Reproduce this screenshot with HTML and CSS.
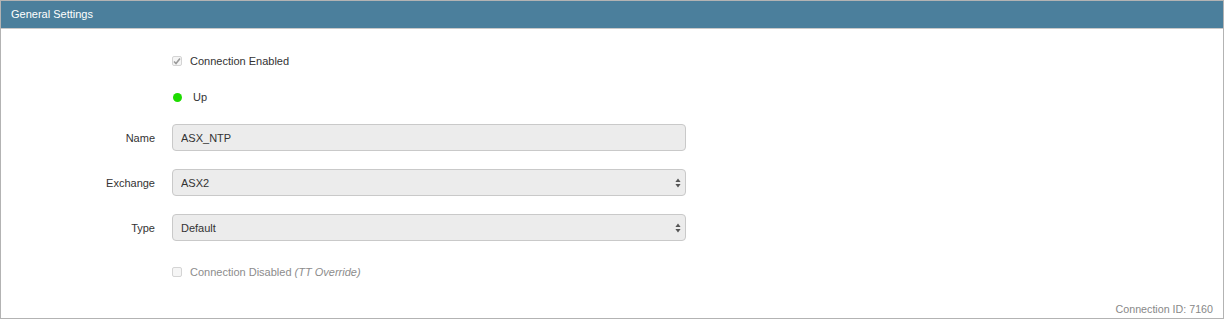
FILE: index.html
```html
<!DOCTYPE html>
<html lang="en">
<head>
  <meta charset="UTF-8">
  <link rel="stylesheet" href="styles.css">
</head>
<body>

  <div class="panel">
    <div class="panel-heading">General Settings</div>

    <div class="panel-body">
      <div class="row row-check">
        <span class="label"></span>
        <span class="check checked">
          <svg width="8" height="8" viewBox="0 0 8 8"><path d="M1 4.5 L3 6.5 L7 1.5" fill="none" stroke="#9a9a9a" stroke-width="1.6"/></svg>
        </span>
        <span class="check-text">Connection Enabled</span>
      </div>

      <div class="row row-status">
        <span class="label"></span>
        <span class="dot"></span>
        <span class="status-text">Up</span>
      </div>

      <div class="row row-field">
        <label class="label" for="name">Name</label>
        <input class="control" id="name" type="text" value="ASX_NTP" disabled>
      </div>

      <div class="row row-field">
        <label class="label" for="exchange">Exchange</label>
        <div class="select-wrap">
          <select class="control" id="exchange" disabled>
            <option>ASX2</option>
          </select>
          <svg class="arrows" width="6" height="10" viewBox="0 0 6 10"><path d="M3 0.5 L5.6 4 L0.4 4 Z M3 9.5 L5.6 6 L0.4 6 Z" fill="#555"/></svg>
        </div>
      </div>

      <div class="row row-field">
        <label class="label" for="type">Type</label>
        <div class="select-wrap">
          <select class="control" id="type" disabled>
            <option>Default</option>
          </select>
          <svg class="arrows" width="6" height="10" viewBox="0 0 6 10"><path d="M3 0.5 L5.6 4 L0.4 4 Z M3 9.5 L5.6 6 L0.4 6 Z" fill="#555"/></svg>
        </div>
      </div>

      <div class="row row-check row-disabled">
        <span class="label"></span>
        <span class="check"></span>
        <span class="check-text muted">Connection Disabled <em>(TT Override)</em></span>
      </div>

      <div class="footer">Connection ID: 7160</div>
    </div>
  </div>

</body>
</html>
```

FILE: styles.css
```css
body {
  margin: 0;
  font-family: 'Liberation Sans', Arial, sans-serif;
  font-size: 11px;
  color: #333;
  background: #fff;
}

.panel {
  box-sizing: border-box;
  width: 1224px;
  height: 319px;
  border: 1px solid #b3b3b3;
  display: flex;
  flex-direction: column;
}

.panel-heading {
  height: 27px;
  line-height: 27px;
  padding-left: 10px;
  background: #4b7f9c;
  color: #fff;
  border-bottom: 1px solid #c8c8c8;
}

.panel-body {
  flex: 1;
  display: flex;
  flex-direction: column;
  padding-top: 22px;
}

.row {
  display: flex;
  align-items: center;
}

.label {
  width: 154px;
  flex: none;
  text-align: right;
  margin-right: 17px;
}

.row-check {
  height: 20px;
}

.row-status {
  height: 20px;
  margin-top: 16px;
}

.row-field {
  height: 27px;
  margin-top: 17px;
}

.row-field + .row-field {
  margin-top: 18px;
}

.row-disabled {
  margin-top: 21px;
}

.check {
  box-sizing: border-box;
  width: 10px;
  height: 10px;
  border: 1px solid #d4d4d4;
  border-radius: 2px;
  background: #f5f5f5;
  display: flex;
  align-items: center;
  justify-content: center;
}

.check-text {
  margin-left: 8px;
}

.muted {
  color: #8c8c8c;
}

.dot {
  width: 9px;
  height: 9px;
  border-radius: 50%;
  background: #1edc00;
  margin-left: 1px;
}

.status-text {
  margin-left: 11px;
}

.control {
  box-sizing: border-box;
  width: 514px;
  height: 27px;
  padding: 0 8px;
  border: 1px solid #c9c9c9;
  border-radius: 4px;
  background: #ececec;
  color: #333;
  font-family: inherit;
  font-size: 11px;
  appearance: none;
  -webkit-appearance: none;
  opacity: 1;
  margin: 0;
}

.select-wrap {
  position: relative;
}

.arrows {
  position: absolute;
  right: 5px;
  top: 9px;
}

.footer {
  margin-top: auto;
  text-align: right;
  padding: 0 10px 3px 0;
  color: #888;
  font-size: 10.7px;
}
```
